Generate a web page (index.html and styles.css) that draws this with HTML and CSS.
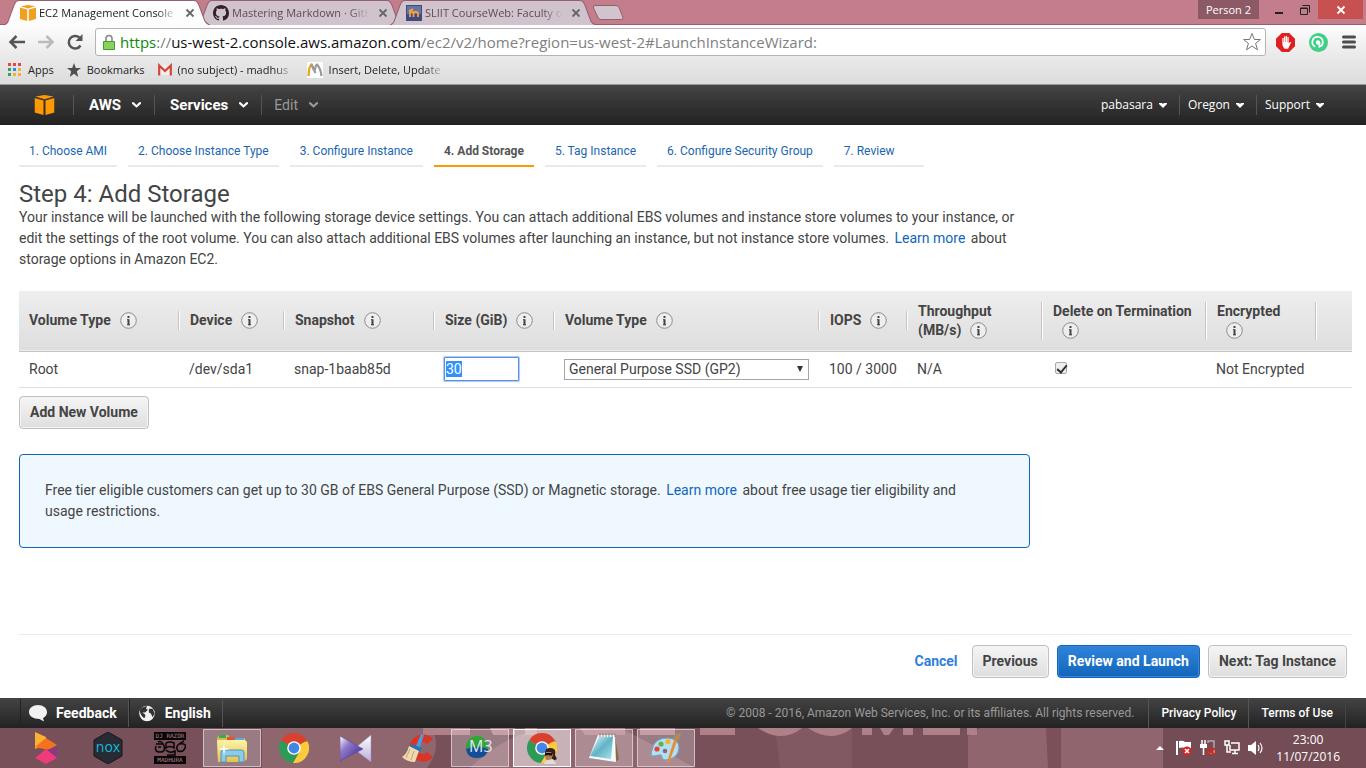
FILE: index.html
```html
<!DOCTYPE html>
<html lang="en">
<head>
<meta charset="utf-8">
<title>EC2 Management Console</title>
<link rel="stylesheet" href="styles.css">
</head>
<body>
<svg width="0" height="0" class="defs" aria-hidden="true">
  <defs>
    <linearGradient id="gPlay" x1="0" y1="0" x2="1" y2="1"><stop offset="0" stop-color="#fff"/><stop offset=".35" stop-color="#8d78c8"/><stop offset="1" stop-color="#3a1f8c"/></linearGradient>
    <linearGradient id="gPale" x1="0" y1="0" x2="0" y2="1"><stop offset="0" stop-color="#fff"/><stop offset="1" stop-color="#b9aedd"/></linearGradient>
    <linearGradient id="gFolder" x1="0" y1="0" x2="0" y2="1"><stop offset="0" stop-color="#fff3a8"/><stop offset="1" stop-color="#e2c350"/></linearGradient>
    <linearGradient id="gNote" x1="0" y1="0" x2="1" y2="1"><stop offset="0" stop-color="#e8fbff"/><stop offset=".5" stop-color="#62b3c6"/><stop offset="1" stop-color="#a9e1ea"/></linearGradient>
    <symbol id="info" viewBox="0 0 17 17"><circle cx="8.5" cy="8.500" r="7.800" fill="#eee" stroke="#8c8c8c"/><path d="M8.500 4v2M8.500 7.200v6" stroke="#444" stroke-width="2" fill="none"/><path d="M7 7.700h1.500M7 12.700h3" stroke="#444" fill="none"/></symbol>
    <symbol id="tab" viewBox="0 0 206 24" preserveAspectRatio="none"><path d="M0 24C4 23 4 21 5 18L10 5Q12 .5 15 .5H190Q193 .5 195 5L200 18C201 21 202 23 206 24" stroke="#95606e"/></symbol>
    <symbol id="x" viewBox="0 0 10 10"><path d="M1.500 1.500l7 7M8.500 1.500l-7 7" stroke="currentColor" stroke-width="1.800"/></symbol>
    <symbol id="cube" viewBox="0 0 20 20"><path d="M1 1.500L10 0l9 1.500-9 2.800zM0 3l9 2.500V20l-9-2.500zM20 3l-9 2.500V20l9-2.500z"/></symbol>
    <symbol id="chev" viewBox="0 0 10 6"><path d="M0 0h2l3 3 3-3h2v1.500L5 6 0 1.500z" fill="currentColor"/></symbol>
    <symbol id="tri" viewBox="0 0 8 5"><path d="M0 0h3l1 1 1-1h3v1L4 5 0 1z" fill="currentColor"/></symbol>
    <symbol id="chrome" viewBox="0 0 30 30"><path d="M15 15L2 7.500A15 15 0 0 1 28 7.500z" fill="#d9412f"/><path d="M15 15L2 7.500A15 15 0 0 0 14 30l7-11.500z" fill="#2d9a55"/><path d="M15 15h0L28 7.500A15 15 0 0 1 14 30l7-12z" fill="#fccb3b"/><path d="M15 8.500h13.500V7.500H15z" fill="#d9412f"/><circle cx="15" cy="15" r="6.800" fill="#fff"/><circle cx="15" cy="15" r="5.400" fill="#4286e6"/></symbol>
  </defs>
</svg>

<header class="browser">
  <div class="titlebar">
    <div class="tabs">
      <div class="tab active"><svg class="tab-bg"><use href="#tab"/></svg>
        <svg class="fav" viewBox="0 0 20 20" fill="#f0a01e"><use href="#cube"/></svg>
        <span class="tab-title">EC2 Management Console</span>
        <button class="tab-x" aria-label="Close tab"><svg><use href="#x"/></svg></button></div>
      <div class="tab"><svg class="tab-bg"><use href="#tab"/></svg>
        <svg class="fav" viewBox="0 0 16 16"><path fill="#33202a" d="M8 0C3.580 0 0 3.580 0 8c0 3.540 2.290 6.530 5.470 7.590.4.070.55-.17.55-.38 0-.19-.01-.82-.01-1.490-2.010.37-2.530-.49-2.690-.94-.09-.23-.48-.94-.82-1.130-.28-.15-.68-.52-.01-.53.63-.01 1.080.58 1.230.82.72 1.210 1.870.87 2.330.66.07-.52.28-.87.51-1.070-1.780-.2-3.640-.89-3.640-3.950 0-.87.31-1.590.82-2.150-.08-.2-.36-1.020.08-2.120 0 0 .67-.21 2.200.82.640-.18 1.320-.27 2-.27s1.360.09 2 .27c1.530-1.040 2.200-.82 2.200-.82.44 1.100.16 1.920.08 2.120.51.56.82 1.270.82 2.150 0 3.070-1.870 3.750-3.650 3.950.29.25.54.73.54 1.480 0 1.070-.01 1.930-.01 2.200 0 .21.15.46.55.38A8.010 8.010 0 0 0 16 8c0-4.420-3.580-8-8-8z"/></svg>
        <span class="tab-title">Mastering Markdown · GitHub</span>
        <button class="tab-x" aria-label="Close tab"><svg><use href="#x"/></svg></button></div>
      <div class="tab"><svg class="tab-bg"><use href="#tab"/></svg>
        <svg class="fav" viewBox="0 0 16 16"><path d="M0 0h16v16H0z" fill="#3d4c7c"/><path d="M1 1h14v8H1z" fill="#66759e"/><path d="M4 12V7.500q2-2 3.500 0V12M7.500 8q2-2.500 4.500 0v4M3 6l4-2" fill="none" stroke="#f5a244" stroke-width="1.800"/></svg>
        <span class="tab-title">SLIIT CourseWeb: Faculty of</span>
        <button class="tab-x" aria-label="Close tab"><svg><use href="#x"/></svg></button></div>
      <button class="new-tab" aria-label="New tab"><svg viewBox="0 0 32 16"><path d="M3 .5h21q2 0 3 2l4 10q1 2-2 2H9q-2 0-3-2L1.500 3Q1 .5 3 .5z" fill="#d2c4ce" stroke="#95606e"/></svg></button>
    </div>
    <div class="controls">
      <button class="person">Person 2</button>
      <button class="ctl" aria-label="Minimize"><svg viewBox="0 0 10 10"><path d="M1 8h8" stroke="#222" stroke-width="2"/></svg></button>
      <button class="ctl" aria-label="Restore"><svg viewBox="0 0 10 10"><path d="M.5 3h7v6.500h-7zM.5 3.500h7M2.500 .5h7v7" fill="none" stroke="#222"/></svg></button>
      <button class="ctl close" aria-label="Close"><svg><use href="#x"/></svg></button>
    </div>
  </div>
  <div class="toolbar">
    <button class="tool" aria-label="Back"><svg viewBox="0 0 18 18"><path d="M17 9H3M8.500 3L2.500 9l6 6" fill="none" stroke="#555" stroke-width="2.500"/></svg></button>
    <button class="tool" aria-label="Forward"><svg viewBox="0 0 18 18"><path d="M1 9h14M9.500 3l6 6-6 6" fill="none" stroke="#bbb" stroke-width="2.500"/></svg></button>
    <button class="tool" aria-label="Reload"><svg viewBox="0 0 18 18"><path d="M14.500 12.500A6.300 6.300 0 1 1 13.500 4.700" fill="none" stroke="#555" stroke-width="2.500"/><path d="M16.500 1v7h-7z" fill="#555"/></svg></button>
    <div class="omnibox">
      <svg class="lock" viewBox="0 0 12 16"><path d="M3 8V4.500a3 3 0 0 1 6 0V8" fill="none" stroke="#888" stroke-width="1.600"/><path d="M.5 7.500h11v8H.5z" fill="#8ad25c" stroke="#4a9a34"/></svg>
      <span class="url"><b>https</b>://<i>us-west-2.console.aws.amazon.com</i>/ec2/v2/home?region=us-west-2#LaunchInstanceWizard:</span>
      <svg class="star" viewBox="0 0 20 20"><path d="M10 1.500l2.400 6h6l-4.800 3.900 1.900 6.400L10 14l-5.500 3.800 1.900-6.400L1.600 7.500h6z" fill="#fff" stroke="#777"/></svg>
    </div>
    <div class="exts">
      <svg viewBox="0 0 18 18"><path d="M5.500 0h7L18 5.500v7L12.500 18h-7L0 12.500v-7z" fill="#e02020"/><path d="M6 10V5q.6-1 1.200 0v3.500h.4V3.500q.6-1 1.200 0v5h.4V3q.6-1 1.200 0v5.500h.4V4q.6-1 1.200 0v6l1.200-1.500q1.500-.3.700 1.200L11.500 15H8Q6 13 6 10z" fill="#fff"/></svg>
      <svg viewBox="0 0 20 20"><circle cx="10" cy="10" r="10" fill="#3fcf85"/><circle cx="9.500" cy="10" r="2.300" fill="#fff"/><path d="M6.500 14.500a5.500 5.500 0 1 1 8-4.500q0 3.500-3.500 4.500V10" fill="none" stroke="#fff" stroke-width="1.800"/></svg>
      <svg viewBox="0 0 14 14"><path d="M1.500 2h11M1.500 7h11M1.500 12h11" stroke="#4d4d4d" stroke-width="3" stroke-linecap="round"/></svg>
    </div>
  </div>
  <nav class="bookmarks">
    <a href="#" class="bm"><svg viewBox="0 0 14 14"><path d="M0 0h3v3H0zM5 0h3v3H5zM10 0h3v3h-3z" fill="#dd4b3e"/><path d="M0 5h3v3H0zM0 10h3v3H0z" fill="#3aa05c"/><path d="M5 5h3v3H5z" fill="#3c82ee"/><path d="M10 5h3v3h-3zM10 10h3v3h-3zM5 10h3v3H5z" fill="#f0b429"/></svg>Apps</a>
    <a href="#" class="bm"><svg viewBox="0 0 14 14"><path d="M7 0l1.800 5H14l-4.200 3.300L11.300 14 7 10.700 2.700 14l1.500-5.700L0 5h5.200z" fill="#4f4f4f"/></svg>Bookmarks</a>
    <a href="#" class="bm"><svg viewBox="0 0 14 12"><path d="M1 1h12v10H1z" fill="#f3eeee"/><path d="M1.200 11.500V1.500L7 7l5.800-5.500v10" fill="none" stroke="#d3453a" stroke-width="2.200"/></svg><span class="fade">(no subject) - madhus</span></a>
    <a href="#" class="bm sheet"><svg viewBox="0 0 16 16"><path d="M0 0h16v16H0z" fill="#fff"/><path d="M1.500 14Q2 4 4.500 2.500L7 8" fill="none" stroke="#eaa42b" stroke-width="2.400"/><path d="M4.500 2.500L8.500 11M8 8Q8.500 3 10 2.500 13.500 6 14.500 14" fill="none" stroke="#999" stroke-width="2.200"/></svg><span class="fade">Insert, Delete, Update</span></a>
  </nav>
</header>

<nav class="aws-nav">
  <a href="#" class="logo" aria-label="AWS home"><svg viewBox="0 0 20 20" fill="#f90"><use href="#cube"/></svg></a>
  <button class="menu">AWS<svg><use href="#chev"/></svg></button>
  <button class="menu">Services<svg><use href="#chev"/></svg></button>
  <button class="menu dim">Edit<svg><use href="#chev"/></svg></button>
  <div class="account">
    <button class="sub">pabasara<svg><use href="#tri"/></svg></button>
    <button class="sub">Oregon<svg><use href="#tri"/></svg></button>
    <button class="sub">Support<svg><use href="#tri"/></svg></button>
  </div>
</nav>

<main class="page">
  <nav class="steps">
    <a href="#">1. Choose AMI</a><a href="#">2. Choose Instance Type</a><a href="#">3. Configure Instance</a><a href="#" class="current">4. Add Storage</a><a href="#">5. Tag Instance</a><a href="#">6. Configure Security Group</a><a href="#">7. Review</a>
  </nav>
  <h1>Step 4: Add Storage</h1>
  <p class="intro">Your instance will be launched with the following storage device settings. You can attach additional EBS volumes and instance store volumes to your instance, or edit the settings of the root volume. You can also attach additional EBS volumes after launching an instance, but not instance store volumes. <a href="#" class="more">Learn more</a> about storage options in Amazon EC2.</p>

  <table class="volumes">
    <colgroup><col class="c-type"><col class="c-dev"><col class="c-snap"><col class="c-size"><col class="c-vol"><col class="c-iops"><col class="c-thr"><col class="c-del"><col class="c-enc"><col></colgroup>
    <thead><tr>
      <th><div>Volume Type<svg><use href="#info"/></svg></div></th>
      <th><div>Device<svg><use href="#info"/></svg></div></th>
      <th><div>Snapshot<svg><use href="#info"/></svg></div></th>
      <th><div>Size (GiB)<svg><use href="#info"/></svg></div></th>
      <th><div>Volume Type<svg><use href="#info"/></svg></div></th>
      <th><div>IOPS<svg><use href="#info"/></svg></div></th>
      <th><div>Throughput<br>(MB/s)<svg><use href="#info"/></svg></div></th>
      <th><div>Delete on Termination<br><svg><use href="#info"/></svg></div></th>
      <th><div>Encrypted<br><svg><use href="#info"/></svg></div></th>
      <th></th>
    </tr></thead>
    <tbody><tr>
      <td>Root</td><td>/dev/sda1</td><td>snap-1baab85d</td>
      <td class="field"><input id="size" class="size" type="text" value="30" aria-label="Size (GiB)"></td>
      <td class="field"><div class="select"><select aria-label="Volume Type"><option>General Purpose SSD (GP2)</option></select></div></td>
      <td class="nowrap">100 / 3000</td><td>N/A</td>
      <td><input class="check" type="checkbox" checked aria-label="Delete on Termination"></td>
      <td class="nowrap">Not Encrypted</td><td></td>
    </tr></tbody>
  </table>
  <button class="btn">Add New Volume</button>

  <p class="notice">Free tier eligible customers can get up to 30 GB of EBS General Purpose (SSD) or Magnetic storage. <a href="#" class="more">Learn more</a> about free usage tier eligibility and usage restrictions.</p>

  <div class="actions">
    <a href="#" class="cancel">Cancel</a>
    <button class="btn">Previous</button>
    <button class="btn primary">Review and Launch</button>
    <button class="btn">Next: Tag Instance</button>
  </div>
</main>

<footer class="aws-foot">
  <a href="#" class="foot-main"><svg viewBox="0 0 18 17"><path d="M9 0c5 0 9 3 9 7s-3 5.500-4 6l1 3.500L10.500 14C4 14 0 11 0 7s4-7 9-7z" fill="#f2f2f2"/></svg>Feedback</a>
  <a href="#" class="foot-main"><svg viewBox="0 0 18 18"><circle cx="9" cy="9" r="8.200" fill="#f2f2f2"/><path d="M2 4q4-3 7-3l-1 3 2 1-3 3H4l3 2q1 2-1 4-4-3-4.500-7zM11 4l4 0 2 5-2 4-2-4-2-1z" fill="#333"/></svg>English</a>
  <span class="copy">© 2008 - 2016, Amazon Web Services, Inc. or its affiliates. All rights reserved.</span>
  <a href="#" class="foot-link">Privacy Policy</a>
  <a href="#" class="foot-link">Terms of Use</a>
</footer>

<div class="taskbar">
  <svg class="wall" viewBox="0 0 1366 40" preserveAspectRatio="none" aria-hidden="true">
    <path d="M0 0h1366v40H0z" fill="#77505a"/>
    <path d="M262 0h170q10 20-5 40H262z" fill="#90666e"/>
    <path d="M470 40q40-40 90-40h60q40 20 75 40z" fill="#90646f"/>
    <path d="M775 0h77v40h-72z" fill="#815963"/>
    <path d="M968 8l12-8h70v40h-82zM1060 0h103v40h-103z" fill="#90656e"/>
    <path d="M1046 0h15v40h-13z" fill="#7c4f59"/>
    <path d="M423 0h47v7h-47zM490 0h25v7h-22zM525 0h12v7h-12zM580 0h45v7h-40zM640 0h35v7h-35zM700 0h35v7h-35zM758 0h44q-20 16-44 0zM808 0h44q-20 16-44 0zM862 0h10v7h-10zM880 0h14l-5 7h-5zM903 0h10v7h-10zM923 0h37v7h-37zM967 0h10v7h-10z" fill="#b08088"/>
    <path d="M1163 0h203v40h-203z" fill="#744c55"/>
  </svg>
  <div class="apps">
    <button class="app" aria-label="Store"><svg viewBox="0 0 32 32"><path d="M5 0l11 5v7L5 17z" fill="#fbb232"/><path d="M16 6l11 7-9 5-13-3z" fill="#f5731d"/><path d="M27 15v12l-11-9z" fill="#8d3687"/><path d="M5 26l11-9 11 9-11 6z" fill="#ee3b79"/></svg></button>
    <button class="app" aria-label="Nox"><svg viewBox="0 0 32 32"><path d="M16 0l14 8v16l-14 8-14-8V8z" fill="#272b33" stroke="#171a20"/><text x="16" y="20" text-anchor="middle" class="nox">nox</text></svg></button>
    <button class="app" aria-label="DJ Razor Madhura"><svg viewBox="0 0 32 32"><path d="M0 0h32v8H0zM0 24h32v8H0z" fill="#080506"/><text x="16" y="6" text-anchor="middle" class="tiny">DJ RAZOR</text><text x="16" y="30" text-anchor="middle" class="tiny">MADHURA</text><path d="M2 14q-2 6 4 6t4-6-6-4M2 12h7M4 15h3M12 11v5q4-3 8 0v-5q-4-2-8 0M12 18q4 4 9 1v4h-8M30 9l-5 3q-4 3-1 7 5 2 7-3t-5-4" fill="none" stroke="#080506" stroke-width="1.500"/></svg></button>
    <button class="app open" aria-label="File Explorer"><svg viewBox="0 0 32 32"><path d="M1 6l2-3h9l2 3h15v23H2z" fill="#d8b84c"/><path d="M3 3h7v3H3z" fill="#2fae54"/><path d="M11 5h8v3h-8z" fill="#e0533b"/><path d="M19 6h9v4h-9z" fill="#5dabdd"/><path d="M1 8h28l2 2v17l-3 3H2z" fill="url(#gFolder)"/><path d="M5 30V20q0-2 3-2h17q3 0 3 2v10h-5v-6H10v6z" fill="#8ecbe8" stroke="#4c93ba"/><path d="M8 11l1 5 5 1-5 1-1 5-1-5-5-1 5-1z" fill="#fff"/></svg></button>
    <button class="app" aria-label="Chrome"><svg viewBox="0 0 32 32"><use href="#chrome" x="1" y="1" width="30" height="30"/></svg></button>
    <button class="app" aria-label="KM Player"><svg viewBox="0 0 32 32"><path d="M31 3v27L14 17z" fill="url(#gPale)" stroke="#9a8ec0" stroke-width=".5"/><path d="M0 4l23 13L0 29z" fill="url(#gPlay)" stroke="#553c9c" stroke-width=".5"/></svg></button>
    <button class="app" aria-label="CCleaner"><svg viewBox="0 0 32 32"><path d="M31 7a13.500 13.500 0 1 0 0 18l-6-5a6 6 0 1 1 0-8z" fill="#d93425"/><path d="M19 2l3 1-4 12-4-1z" fill="#4a9ddd"/><path d="M9 12l11 4-2 4-11-5z" fill="#2475b8"/><path d="M7 14l10 5-4 11q-8 0-13-5 5-3 7-11z" fill="#efd9ae"/><path d="M8 17L4 26M12 19L9 28" stroke="#c5a871" fill="none"/></svg></button>
    <button class="app open" aria-label="M3"><svg viewBox="0 0 32 32"><circle cx="13" cy="15" r="11" fill="#2fa637"/><path d="M2 17q11-5 22 0-1 9-11 9T2 17z" fill="#164d99"/><text x="5" y="20" class="m3">M3</text></svg></button>
    <button class="app open front" aria-label="Chrome, Person 2"><svg viewBox="0 0 32 32"><use href="#chrome" x="1" y="1" width="30" height="30"/><path d="M19 21q0-5 5-5 7 0 5 7l2 4-4 2-3-5z" fill="#35211a"/><path d="M20 20h5l2 3-2 5-4 1-2-4z" fill="#b9794f"/><path d="M19 21h7v2.500h-3l-1-1-1 1h-2z" fill="#111"/><path d="M18 32q1-4 4-4l5-1q2 2 3 5z" fill="#ddd"/></svg></button>
    <button class="app open" aria-label="Notepad"><svg viewBox="0 0 32 32"><path d="M27 5l4 22-4 3z" fill="#8b6c43"/><path d="M10 3h17l1 27-27-4z" fill="#f4fbfc"/><path d="M11 5h14l-2 22-21-3z" fill="url(#gNote)"/><path d="M12 1v4M15 1v4M18 1v4M21 1v4M24 1v4M27 1v4" stroke="#888"/></svg></button>
    <button class="app open" aria-label="Paint"><svg viewBox="0 0 32 32"><path d="M2 18Q4 6 18 6q11 1 11 10-1 11-14 12-3 0-3-3t-3-2-6 1-1-6z" fill="#b6def1" stroke="#6aa5c8"/><circle cx="7" cy="17" r="2.600" fill="#e2453b"/><circle cx="11" cy="12" r="2.600" fill="#5fb548"/><circle cx="18" cy="9.500" r="2.600" fill="#f2b62d"/><circle cx="15" cy="19" r="2.300" fill="#806d7c"/><path d="M24 8l3 1-8 22-2-1z" fill="#e98d33"/><path d="M23 7q1-6 8-6-1 7-4 8z" fill="#b08a5a"/></svg></button>
  </div>
  <div class="tray">
    <svg class="up" viewBox="0 0 8 4"><path d="M0 4l4-4 4 4z" fill="#fff"/></svg>
    <svg viewBox="0 0 16 16"><path d="M1 1v14" stroke="#fff" stroke-width="2"/><path d="M3 1q4-1 6 1h6v6H9Q6 7 3 8z" fill="#fff"/><circle cx="11" cy="11" r="4.500" fill="#d8261c"/><path d="M9 9l4 4M13 9l-4 4" stroke="#fff" stroke-width="1.500"/></svg>
    <svg viewBox="0 0 16 16"><path d="M8 3V1h6v12H8" fill="none" stroke="#b9a5aa" stroke-width="1.500"/><path d="M2 0v4M5 0v4M3.500 8v7" stroke="#fff" stroke-width="1.500"/><path d="M0 4h7v4H0z" fill="#fff"/><path d="M7 8l8 7M15 8l-8 7" stroke="#d8261c" stroke-width="2"/></svg>
    <svg viewBox="0 0 16 16"><path d="M1 1h4v4H1zM3 5v7h4M7 3h8v7H6V5M11 10v3M8 13.500h6" fill="none" stroke="#fff" stroke-width="1.500"/></svg>
    <svg viewBox="0 0 16 16"><path d="M0 5h3l5-4v14l-5-4H0z" fill="#fff"/><path d="M10 5q2 3 0 6M12 3q4 5 0 10" fill="none" stroke="#fff" stroke-width="1.200"/></svg>
    <div class="clock"><span>23:00</span><span>11/07/2016</span></div>
  </div>
</div>
<script src="script.js"></script>
</body>
</html>
```
FILE: styles.css
```css
* { box-sizing: border-box; }
body {
  margin: 0;
  min-height: 100vh;
  display: flex;
  flex-direction: column;
  background: #fff;
  color: #444;
  font: 14px/21px Roboto, "Liberation Sans", sans-serif;
}
button { font: inherit; color: inherit; border: 0; padding: 0; background: none; }
a { text-decoration: none; color: inherit; }
svg { flex: none; }
.defs { position: absolute; }

/* Browser frame */
.browser { font: 11px/16px "Open Sans", "Noto Sans", sans-serif; color: #222; }
.titlebar { display: flex; justify-content: space-between; height: 25px; background: #c47d8b; border-bottom: 1px solid #95606e; }
.tabs { display: flex; padding-left: 4px; }
.tab {
  position: relative;
  display: flex;
  align-items: center;
  width: 206px;
  height: 25px;
  margin-right: -13px;
  padding: 1px 15px 0 16px;
  color: #5e4b56;
}
.tab-bg { position: absolute; inset: 0; width: 100%; height: 100%; fill: #d0c3ce; }
.active { z-index: 1; color: #222; }
.active .tab-bg { fill: #fdfdfd; }
.fav { position: relative; width: 16px; height: 16px; margin-right: 3px; }
.tab-title, .fade {
  overflow: hidden;
  white-space: nowrap;
  -webkit-mask-image: linear-gradient(to left, transparent, #000 20px);
  mask-image: linear-gradient(to left, transparent, #000 20px);
}
.tab-title { position: relative; flex: 1; }
.tab-x { position: relative; width: 10px; height: 10px; margin-left: 8px; color: #666; }
.tab-x svg, .close svg { display: block; width: 10px; height: 10px; }
.new-tab { margin: 5px 0 0 9px; height: 16px; }
.new-tab svg { display: block; width: 32px; height: 16px; }
.controls { display: flex; align-items: flex-start; padding-right: 3px; }
.person { width: 61px; height: 19px; margin-right: 7px; background: #8b5a65; color: #fff; line-height: 18px; }
.ctl { display: flex; align-items: center; justify-content: center; width: 26px; height: 19px; }
.ctl svg { width: 10px; height: 10px; }
.close { width: 45px; background: #c75050; color: #fff; }
.toolbar { display: flex; align-items: center; height: 34px; padding: 0 10px 0 8px; background: linear-gradient(#fdfdfd, #e8e8e8); }
.tool { width: 18px; height: 18px; margin-right: 11px; }
.tool svg { display: block; width: 18px; height: 18px; }
.omnibox {
  flex: 1;
  display: flex;
  align-items: center;
  height: 28px;
  padding: 0 3px 0 7px;
  border: 1px solid #b4b4b4;
  border-radius: 3px;
  background: #fff;
}
.lock { width: 12px; height: 16px; margin-right: 5px; }
.url { flex: 1; font-size: 15px; line-height: 20px; color: #808080; white-space: nowrap; }
.url b { font-weight: 400; color: #0b8a0b; }
.url i { font-style: normal; color: #111; }
.star { width: 20px; height: 20px; }
.exts { display: flex; align-items: center; gap: 14px; padding-left: 10px; }
.exts svg { width: 19px; height: 19px; }
.exts svg:last-child { width: 14px; height: 14px; }
.bookmarks { display: flex; align-items: center; gap: 13px; height: 25px; padding: 0 8px 3px; background: linear-gradient(#e8e8e8, #dcdcdc); }
.bm { display: flex; align-items: center; gap: 6px; }
.bm svg { width: 14px; height: 14px; }
.fade { width: 116px; }
.sheet svg { width: 16px; height: 16px; }

/* Console navigation */
.aws-nav { display: flex; align-items: center; height: 41px; padding: 0 30px 0 34px; background: linear-gradient(#444, #222); border-top: 1px solid #999; color: #fff; }
.logo { margin-right: 18px; }
.logo svg { display: block; width: 21px; height: 20px; }
.menu { display: flex; align-items: center; height: 20px; padding: 0 13px 0 15px; border-left: 1px solid #555; font-weight: 700; font-size: 15px; }
.menu svg { width: 9px; height: 6px; margin-left: 11px; }
.dim { padding-left: 12px; color: #999; font-weight: 400; font-size: 14px; }
.account { display: flex; margin-left: auto; font: 12px/20px "Open Sans", "Noto Sans", sans-serif; }
.sub { display: flex; align-items: center; height: 20px; padding: 0 12px 0 8px; }
.sub + .sub { border-left: 1px solid #555; }
.sub svg { width: 8px; height: 5px; margin-left: 6px; }

/* Wizard */
.page { flex: 1; display: flex; flex-direction: column; align-items: flex-start; padding: 16px 14px 20px 19px; }
.steps { display: flex; gap: 11px; font-size: 12px; line-height: 20px; color: #1a66b3; }
.steps a { min-width: 90px; padding: 0 10px 4px; border-bottom: 2px solid #eaeaea; }
.steps .current { color: #555; font-weight: 700; border-color: #f90; }
h1 { margin: 13px 0 0; font-size: 24px; line-height: 28px; font-weight: 400; }
.intro { margin: -1px 0 21px; max-width: 1011px; }
.more { color: #1166bb; margin: 0 2px; }
.volumes { width: 100%; border-collapse: collapse; table-layout: fixed; margin-bottom: 8px; }
.c-type { width: 160px; }
.c-dev { width: 105px; }
.c-snap { width: 150px; }
.c-size { width: 120px; }
.c-vol { width: 265px; }
.c-iops { width: 88px; }
.c-thr { width: 135px; }
.c-del { width: 164px; }
.c-enc { width: 110px; }
.volumes thead tr { height: 60px; background: linear-gradient(#eee, #dedede); border-bottom: 1px solid #c4c4c4; }
.volumes th { padding: 0; text-align: left; font-weight: 700; line-height: 19px; }
.volumes th div { padding-left: 10px; border-right: 1px solid #c4c4c4; box-shadow: 1px 0 #fff; white-space: nowrap; }
.volumes th + th div { padding-left: 11px; }
.volumes th svg { width: 17px; height: 17px; margin-left: 9px; vertical-align: -4px; }
.volumes td { height: 36px; padding: 0 10px; border-bottom: 1px solid #ddd; }
.volumes .nowrap { padding-right: 0; white-space: nowrap; }
.size { display: block; width: 75px; height: 24px; padding: 0 1px; border: 1px solid #5b8fe0; border-radius: 1px; outline: 0; box-shadow: 0 0 1px 1px #a9c7f5; font: inherit; color: inherit; }
.size::selection { background: #3390ff; color: #fff; }
.select { position: relative; width: 245px; }
.select::after { content: ""; position: absolute; right: 6px; top: 7px; border: 3px solid transparent; border-top: 6px solid #333; border-bottom: 0; }
.select select { appearance: none; display: block; width: 100%; height: 21px; padding: 0 4px; border: 1px solid #a6a6a6; border-radius: 0; background: #fff; font: inherit; line-height: 19px; color: inherit; }
.check { appearance: none; position: relative; display: block; width: 12px; height: 12px; margin: 0 0 3px 3px; border: 1px solid #aaa; border-radius: 2px; background: #eee; }
.check:checked::after { content: ""; position: absolute; left: 3px; top: 0; width: 4px; height: 8px; border: solid #333; border-width: 0 2px 2px 0; transform: rotate(40deg); }
.btn { height: 33px; padding: 0 10px; border: 1px solid #c0c0c0; border-radius: 4px; background: linear-gradient(#f5f5f5, #dedede); box-shadow: inset 0 0 0 1px #f4f4f4; font-weight: 700; white-space: nowrap; }
.primary { border-color: #1166bb; background: linear-gradient(#2f83dc, #1166bb); box-shadow: inset 0 0 0 1px #3b86d2; color: #fff; }
.notice { width: 100%; max-width: 1011px; margin: 25px 0 20px; padding: 25px 50px 25px 25px; border: 1px solid #1166bb; border-radius: 4px; background: #f0f8ff; }
.actions { display: flex; align-items: center; justify-content: flex-end; gap: 8px; align-self: stretch; margin-top: auto; padding: 10px 5px 0 0; border-top: 1px solid #eaeaea; }
.cancel { margin-right: 6px; color: #2f7fdc; font-weight: 700; }

/* Console footer */
.aws-foot { display: flex; align-items: center; height: 30px; padding: 0 20px; background: linear-gradient(#444, #222); color: #fff; font-size: 12px; line-height: 30px; }
.foot-main { display: flex; align-items: center; gap: 9px; padding: 0 11px 0 8px; border-left: 1px solid #222; border-right: 1px solid #555; font-weight: 700; font-size: 14px; line-height: 28px; }
.foot-main svg { width: 18px; height: 17px; }
.copy { margin-left: auto; padding-right: 14px; color: #999; }
.foot-link { padding: 0 12px; border-left: 1px solid #555; font-weight: 500; }
.foot-link:last-child { border-right: 1px solid #444; }

/* Desktop taskbar */
.taskbar { position: relative; display: flex; justify-content: space-between; height: 40px; padding: 1px 26px 1px 17px; color: #fff; }
.wall { position: absolute; inset: 0; width: 100%; height: 100%; }
.apps { position: relative; display: flex; gap: 4px; }
.app { display: flex; align-items: center; justify-content: center; width: 58px; height: 38px; }
.app svg { width: 32px; height: 32px; }
.open { background: rgba(255, 255, 255, .25); border: 1px solid rgba(255, 255, 255, .5); }
.front { background: rgba(255, 255, 255, .5); border-color: #fff; }
.nox { font: 14px "Open Sans", sans-serif; fill: #16b8d8; }
.tiny { font: 6px "DejaVu Sans Mono", monospace; fill: #b5838e; }
.m3 { font: 16px "Open Sans", sans-serif; fill: #dfe6ee; }
.tray { position: relative; display: flex; align-items: center; gap: 8px; font: 12px/17px "Open Sans", "Noto Sans", sans-serif; }
.tray svg { width: 16px; height: 16px; }
.tray .up { width: 8px; height: 4px; margin-right: 4px; }
.tray .up + svg { margin-right: 0; }
.clock { display: flex; flex-direction: column; align-items: center; margin-left: 4px; }
```
FILE: script.js
```js
const size = document.getElementById('size');
size.focus();
size.select();
```
